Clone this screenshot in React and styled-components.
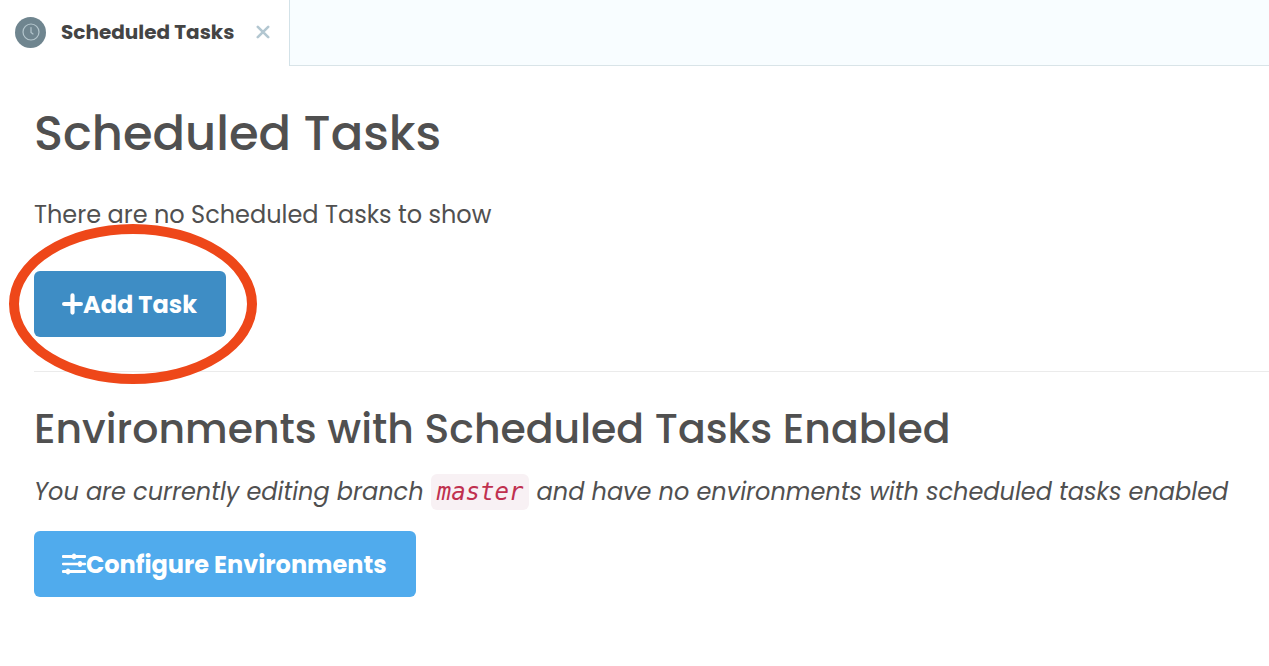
import React from "react";
import styled, { createGlobalStyle } from "styled-components";

const App = () => {
    return (
        <>
            <GlobalStyle />
            <TabBar>
                <Tab>
                    <TabIcon>
                        <svg width="18" height="18" viewBox="0 0 18 18" fill="none" stroke="#b4c6cd" strokeWidth="1.2" strokeLinecap="round" aria-hidden="true">
                            <circle cx="9" cy="9" r="8" />
                            <path d="M9 4.5V9.5L11 11" />
                        </svg>
                    </TabIcon>
                    <TabLabel>Scheduled Tasks</TabLabel>
                    <CloseButton aria-label="Close tab">
                        <svg width="14" height="14" viewBox="0 0 14 14" stroke="#b3c7d1" strokeWidth="2.6" strokeLinecap="round" aria-hidden="true">
                            <path d="M1.8 1.8L12.2 12.2M12.2 1.8L1.8 12.2" />
                        </svg>
                    </CloseButton>
                </Tab>
            </TabBar>
            <MainArea>
                <Title>Scheduled Tasks</Title>
                <Message>There are no Scheduled Tasks to show</Message>
                <Highlight>
                    <Button $color="#3e8dc5">
                        <svg width="21" height="22" viewBox="0 0 21 22" stroke="#fff" strokeWidth="4.2" strokeLinecap="round" aria-hidden="true">
                            <path d="M10.5 2.4V19.6M2.1 11H18.9" />
                        </svg>
                        Add Task
                    </Button>
                    <Ring />
                </Highlight>
                <Divider />
                <SubTitle>Environments with Scheduled Tasks Enabled</SubTitle>
                <BranchNote>
                    You are currently editing branch <Code>master</Code> and have no environments with scheduled tasks enabled
                </BranchNote>
                <Button $color="#50abed">
                    <svg width="24" height="22" viewBox="0 0 24 22" fill="#fff" aria-hidden="true">
                        <rect y="2" width="24" height="3" rx="1" />
                        <rect y="9.7" width="24" height="2.6" rx="1" />
                        <rect y="17" width="24" height="3" rx="1" />
                        <rect x="10" y="0.5" width="4" height="6" rx="2" />
                        <rect x="16" y="8" width="4" height="6" rx="2" />
                        <rect x="4" y="15.5" width="4" height="6" rx="2" />
                    </svg>
                    Configure Environments
                </Button>
            </MainArea>
        </>
    )
}

export default App;


const GlobalStyle = createGlobalStyle`
* {
    box-sizing: border-box;
}

body {
    margin: 0;
    background: #fff;
    color: #505050;
    font-family: Poppins, Inter, sans-serif;
    overflow-x: hidden;
}
`

const TabBar = styled.header`
display: flex;
height: 66px;
background: linear-gradient(#d9e4e8, #d9e4e8) bottom / 100% 1px no-repeat #f8fdff;
`

const Tab = styled.div`
display: flex;
align-items: center;
padding: 0 19px 2px 15px;
background: #fff;
border-right: 1px solid #d3e2e8;
`

const TabIcon = styled.span`
display: flex;
align-items: center;
justify-content: center;
width: 31px;
height: 31px;
margin-right: 15px;
border-radius: 50%;
background: #6f858f;
`

const TabLabel = styled.span`
font-size: 20px;
font-weight: 700;
line-height: 30px;
color: #444;
`

const CloseButton = styled.button`
display: flex;
margin-left: 22px;
padding: 0;
border: 0;
background: none;
cursor: pointer;
`

const MainArea = styled.main`
padding: 32px 0 32px 34px;
`

const Title = styled.h1`
margin: 0 0 30px;
font-size: 48px;
font-weight: 500;
line-height: 72px;
`

const Message = styled.p`
margin: 0 0 42px;
font-size: 24px;
line-height: 29px;
`

const Highlight = styled.div`
position: relative;
width: fit-content;
`

const Ring = styled.span`
position: absolute;
top: -47px;
right: -31px;
bottom: -47px;
left: -25px;
border: 10px solid #ee4719;
border-radius: 50%;
pointer-events: none;
`

const Button = styled.button`
display: flex;
align-items: center;
height: 66px;
padding: 0 29px 0 28px;
border: 0;
border-radius: 6px;
background: ${props => props.$color};
color: #fff;
font-family: inherit;
font-size: 24px;
font-weight: 700;
cursor: pointer;
`

const Divider = styled.hr`
margin: 34px 0 26px;
border: 0;
border-top: 1px solid #ebebeb;
`

const SubTitle = styled.h2`
margin: 0 0 14px;
font-size: 41px;
font-weight: 500;
line-height: 62px;
`

const BranchNote = styled.p`
margin: 0 0 21px;
font-size: 24px;
font-style: italic;
line-height: 36px;
`

const Code = styled.code`
padding: 4px 6px;
border-radius: 6px;
background: #f8f1f4;
color: #c0304f;
font-family: "DejaVu Sans Mono", monospace;
font-size: 24px;
`
